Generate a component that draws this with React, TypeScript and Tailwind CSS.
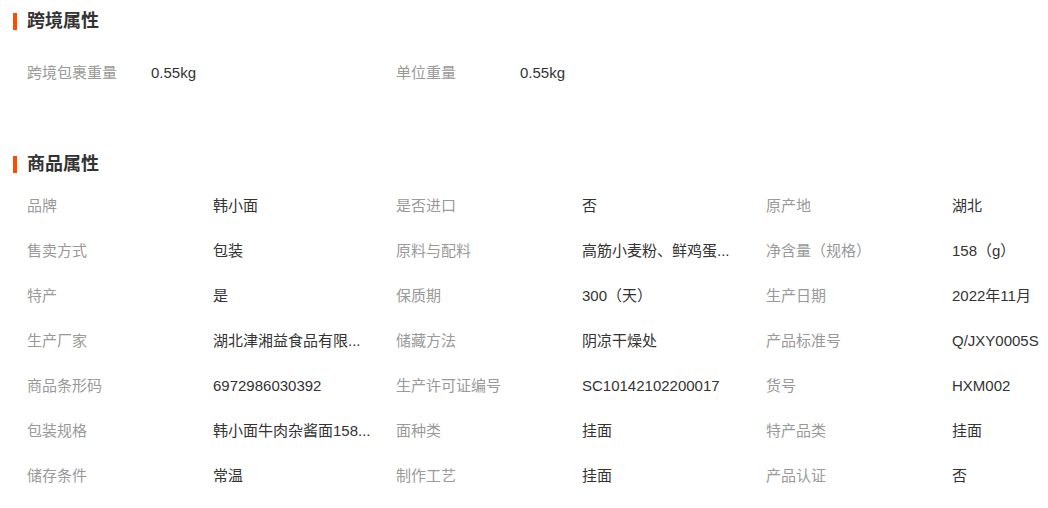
const crossBorder = [
  { label: "跨境包裹重量", value: "0.55kg" },
  { label: "单位重量", value: "0.55kg" },
];

// values are shown already shortened, as on the page
const attrs = [
  { label: "品牌", value: "韩小面" },
  { label: "是否进口", value: "否" },
  { label: "原产地", value: "湖北" },
  { label: "售卖方式", value: "包装" },
  { label: "原料与配料", value: "高筋小麦粉、鲜鸡蛋..." },
  { label: "净含量（规格）", value: "158（g）" },
  { label: "特产", value: "是" },
  { label: "保质期", value: "300（天）" },
  { label: "生产日期", value: "2022年11月" },
  { label: "生产厂家", value: "湖北津湘益食品有限..." },
  { label: "储藏方法", value: "阴凉干燥处" },
  { label: "产品标准号", value: "Q/JXY0005S" },
  { label: "商品条形码", value: "6972986030392" },
  { label: "生产许可证编号", value: "SC10142102200017" },
  { label: "货号", value: "HXM002" },
  { label: "包装规格", value: "韩小面牛肉杂酱面158..." },
  { label: "面种类", value: "挂面" },
  { label: "特产品类", value: "挂面" },
  { label: "储存条件", value: "常温" },
  { label: "制作工艺", value: "挂面" },
  { label: "产品认证", value: "否" },
];

function SectionTitle({ title }: { title: string }) {
  return (
    <div className="h-[40px] flex items-center pl-[13px]">
      <span className="w-[4px] h-[17px] bg-[#ff4a00] mr-[10px]" />
      <h2 className="text-[18px] font-bold text-[#333]">{title}</h2>
    </div>
  );
}

export default function App() {
  return (
    <div
      className="w-[1048px] h-[508px] bg-white text-[15px] overflow-hidden pt-[1px]"
      style={{ fontFamily: '"Liberation Sans", "Noto Sans CJK SC", sans-serif' }}
    >
      <SectionTitle title="跨境属性" />
      <div className="mt-[10px] pl-[27px] grid grid-cols-[369px_370px_1fr]">
        {crossBorder.map((item) => (
          <div key={item.label} className="h-[45px] flex items-center">
            <span className="w-[124px] shrink-0 text-[#999]">{item.label}</span>
            <span className="text-[#333]">{item.value}</span>
          </div>
        ))}
      </div>

      <div className="mt-[48px]">
        <SectionTitle title="商品属性" />
        <div className="pl-[27px] grid grid-cols-[369px_370px_1fr]">
          {attrs.map((item) => (
            <div key={item.label} className="h-[45px] flex items-center">
              <span className="w-[186px] shrink-0 whitespace-nowrap text-[#999]">{item.label}</span>
              <span className="whitespace-nowrap text-[#333]">{item.value}</span>
            </div>
          ))}
        </div>
      </div>
    </div>
  );
}
